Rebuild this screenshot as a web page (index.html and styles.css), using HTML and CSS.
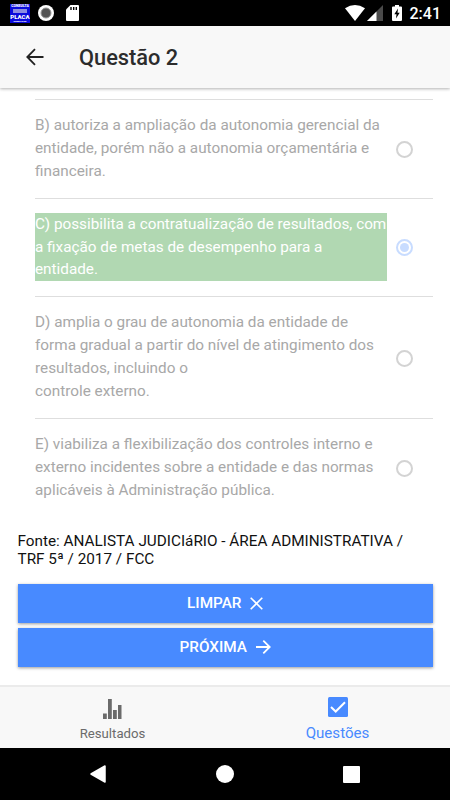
FILE: index.html
```html
<!DOCTYPE html>
<html lang="pt-BR">
<head>
    <meta charset="UTF-8">
    <meta name="viewport" content="width=device-width, initial-scale=1.0">
    <title>Questão 2</title>
    <link rel="stylesheet" href="styles.css">
</head>
<body>
    <div class="status-bar">
        <div class="status-left">
            <div class="app-icon">
                <span class="app-small">CONSULTA</span>
                <span class="app-mid"></span>
                <span class="app-big">PLACA</span>
                <span class="app-tiny">COMPLETA</span>
            </div>
            <svg class="record-icon" width="16" height="16" viewBox="0 0 16 16">
                <circle cx="8" cy="8" r="8" fill="#fff"/>
                <circle cx="8" cy="8" r="5" fill="#555" stroke="#999" stroke-width="1"/>
            </svg>
            <svg class="sd-icon" width="13" height="16" viewBox="0 0 13 16">
                <path d="M4.5 0H12a1 1 0 0 1 1 1v14a1 1 0 0 1-1 1H1a1 1 0 0 1-1-1V4.6z" fill="#fff"/>
                <path d="M5 2v3M7.7 2v3M10.3 2v3" stroke="#000" stroke-width="1.4"/>
            </svg>
        </div>
        <div class="status-right">
            <svg width="20" height="16" viewBox="0 0 20 16">
                <path d="M0 3.3Q10-3.3 20 3.3L10 16z" fill="#fff"/>
            </svg>
            <svg class="signal-icon" width="16" height="16" viewBox="0 0 16 16">
                <path d="M16 0v16H0z" fill="#4a4a4a"/>
                <path d="M9.5 6.5V16H0z" fill="#fff"/>
            </svg>
            <svg class="battery-icon" width="10" height="16" viewBox="0 0 10 16">
                <path d="M3 0h4v1.5h2a1 1 0 0 1 1 1V15a1 1 0 0 1-1 1H1a1 1 0 0 1-1-1V2.5a1 1 0 0 1 1-1h2z" fill="#fff"/>
                <path d="M6 3.5L2.3 9.2h2.2L4 13.5l3.700-5.800H5.500z" fill="#000"/>
            </svg>
            <span class="clock">2:41</span>
        </div>
    </div>

    <div class="header">
        <svg class="back-icon" width="18" height="18" viewBox="0 0 18 18">
            <path d="M17.5 9H1.5M9 1.2L1.3 9 9 16.8" fill="none" stroke="#222" stroke-width="1.8"/>
        </svg>
        <h1>Questão 2</h1>
    </div>

    <div class="content">
        <div class="options">
            <div class="option">
                <p>B) autoriza a ampliação da autonomia gerencial da<br>entidade, porém não a autonomia orçamentária e<br>financeira.</p>
                <span class="radio"></span>
            </div>
            <div class="option">
                <p class="correct">C) possibilita a contratualização de resultados, com<br>a fixação de metas de desempenho para a<br>entidade.</p>
                <span class="radio checked"></span>
            </div>
            <div class="option">
                <p>D) amplia o grau de autonomia da entidade de<br>forma gradual a partir do nível de atingimento dos<br>resultados, incluindo o<br>controle externo.</p>
                <span class="radio"></span>
            </div>
            <div class="option">
                <p>E) viabiliza a flexibilização dos controles interno e<br>externo incidentes sobre a entidade e das normas<br>aplicáveis à Administração pública.</p>
                <span class="radio"></span>
            </div>
        </div>

        <p class="source">Fonte: ANALISTA JUDICIáRIO - ÁREA ADMINISTRATIVA /<br>TRF 5ª / 2017 / FCC</p>

        <button class="btn">
            <span>LIMPAR</span>
            <svg class="close-icon" width="13" height="13" viewBox="0 0 13 13">
                <path d="M.7.7l11.6 11.6M12.3.7L.7 12.3" stroke="#fff" stroke-width="1.6"/>
            </svg>
        </button>
        <button class="btn">
            <span>PRÓXIMA</span>
            <svg class="next-icon" width="15" height="14" viewBox="0 0 15 14">
                <path d="M0 7h13.5M7.3.7L13.7 7l-6.4 6.3" fill="none" stroke="#fff" stroke-width="1.8"/>
            </svg>
        </button>
    </div>

    <div class="tabs">
        <div class="tab">
            <svg class="stats-icon" width="19" height="20" viewBox="0 0 19 20">
                <path d="M0 14.5h3.8V20H0zM5 0h3.8v20H5zM10 11h3.8v9H10zM15 6h3.5v14H15z" fill="#6b6b6b"/>
            </svg>
            <span>Resultados</span>
        </div>
        <div class="tab active">
            <svg width="20" height="20" viewBox="0 0 20 20">
                <rect width="20" height="20" rx="1.5" fill="#488aff"/>
                <path d="M3 10l4.700 4.500L17 5.200" fill="none" stroke="#fff" stroke-width="2"/>
            </svg>
            <span>Questões</span>
        </div>
    </div>

    <div class="nav-bar">
        <svg width="16" height="18" viewBox="0 0 16 18">
            <path d="M15 1v16L1 9z" fill="#fff" stroke="#fff" stroke-width="1.5" stroke-linejoin="round"/>
        </svg>
        <svg width="18" height="18" viewBox="0 0 18 18">
            <circle cx="9" cy="9" r="9" fill="#fff"/>
        </svg>
        <svg width="17" height="17" viewBox="0 0 17 17">
            <rect width="17" height="17" rx="1" fill="#fff"/>
        </svg>
    </div>
</body>
</html>
```
FILE: styles.css
```css
* {
    box-sizing: border-box;
}

body {
    margin: 0;
    height: 800px;
    display: flex;
    flex-direction: column;
    overflow: hidden;
    background: #fff;
    font-family: Roboto, "Liberation Sans", sans-serif;
}

p, h1 {
    margin: 0;
}

svg {
    display: block;
    flex: none;
}

.status-bar {
    height: 26px;
    flex: none;
    display: flex;
    justify-content: space-between;
    padding: 0 9px 0 10px;
    background: #000;
}

.status-left, .status-right {
    display: flex;
    align-items: center;
}

.app-icon {
    width: 20px;
    height: 19px;
    display: flex;
    flex-direction: column;
    align-items: center;
    overflow: hidden;
    background: #0b0bdc;
    color: #fff;
    font-weight: 900;
}

.app-small {
    font-size: 3.5px;
    line-height: 5px;
}

.app-mid {
    width: 14px;
    height: 4px;
    background: #8d8de0;
}

.app-big {
    font-size: 6px;
    line-height: 7px;
}

.app-tiny {
    font-size: 2.5px;
    line-height: 3px;
}

.record-icon {
    margin-left: 8px;
}

.sd-icon {
    margin-left: 12px;
}

.signal-icon {
    margin-left: 2px;
}

.battery-icon {
    margin: 0 8px 0 9px;
}

.clock {
    padding-top: 1px;
    color: #fff;
    font-size: 16px;
    font-weight: 500;
}

.header {
    height: 62px;
    flex: none;
    display: flex;
    align-items: center;
    padding: 0 26px;
    background: #f8f8f8;
    box-shadow: 0 1px 3px rgba(0, 0, 0, 0.3);
}

.header h1 {
    margin-left: 35px;
    color: #2c2c2c;
    font-size: 21.8px;
    font-weight: 500;
}

.content {
    flex: 1;
    padding: 11px 17px 0 17.5px;
}

.options {
    padding-left: 17.5px;
}

.option {
    display: flex;
    align-items: center;
    justify-content: space-between;
    padding: 13.9px 20px 15.1px 0;
    border-top: 1px solid #dedede;
}

.option p {
    width: 352px;
    color: #a8a8a8;
    font-size: 15.3px;
    line-height: 22.9px;
    white-space: nowrap;
}

.option .correct {
    background: #b1d8b2;
    color: #fff;
}

.radio {
    width: 17px;
    height: 17px;
    flex: none;
    display: flex;
    align-items: center;
    justify-content: center;
    margin-top: 2px;
    border: 2px solid #d3d3d3;
    border-radius: 50%;
}

.radio.checked {
    border-color: #c8dcff;
}

.radio.checked::after {
    content: "";
    width: 9px;
    height: 9px;
    border-radius: 50%;
    background: #c8dcff;
}

.source {
    margin: 15px 0 16px;
    color: #111;
    font-size: 15.3px;
    line-height: 18px;
    white-space: nowrap;
}

.btn {
    width: 100%;
    height: 39px;
    display: flex;
    align-items: center;
    justify-content: center;
    margin-bottom: 5px;
    border: none;
    background: #488aff;
    color: #fff;
    font-family: inherit;
    font-size: 15.3px;
    font-weight: 500;
    box-shadow: 0 1px 3px rgba(0, 0, 0, 0.4);
}

.btn span {
    margin-top: -1px;
}

.close-icon, .next-icon {
    margin-left: 9px;
}

.tabs {
    height: 63px;
    flex: none;
    display: flex;
    background: #f8f8f8;
    border-top: 2px solid #ebebeb;
}

.tab {
    flex: 1;
    display: flex;
    flex-direction: column;
    align-items: center;
    padding-top: 10px;
    color: #6b6b6b;
    font-size: 13.2px;
}

.stats-icon {
    margin-top: 2px;
}

.tab span {
    margin-top: 7px;
}

.tab.active {
    padding-top: 9.5px;
    color: #488aff;
    font-size: 15.1px;
}

.nav-bar {
    height: 52px;
    flex: none;
    display: flex;
    align-items: center;
    justify-content: space-between;
    padding: 0 90px;
    background: #000;
}
```
